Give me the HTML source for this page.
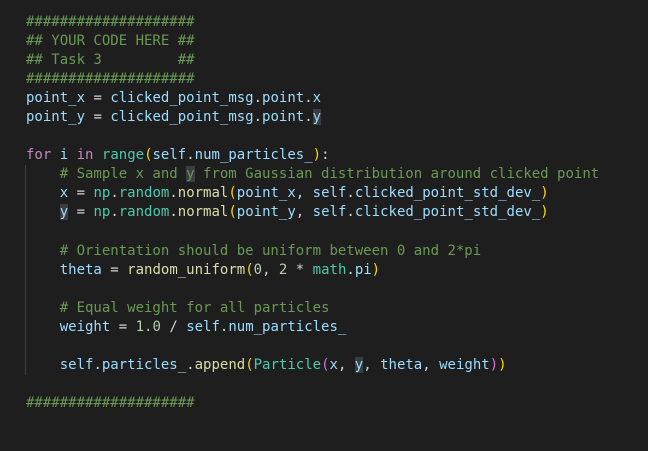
<!DOCTYPE html>
<html><head><style>
html,body{margin:0;padding:0;background:#1e1e1e;width:648px;height:451px;overflow:hidden}
pre{margin:0;position:absolute;left:26px;top:13px;font-family:"DejaVu Sans Mono","Liberation Mono",monospace;font-size:14px;line-height:19.05px;color:#d4d4d4;white-space:pre}
.c{color:#6a9955}.v{color:#9cdcfe}.k{color:#c586c0}.f{color:#dcdcaa}.t{color:#4ec9b0}.n{color:#b5cea8}.p{color:#ffd700}.q{color:#da70d6}
.h{background:#3a3d41}
.guide{position:absolute;left:25px;top:165px;width:1px;height:210px;background:#404040}
</style></head><body>
<div class="guide"></div>
<pre><span class="c">####################
## YOUR CODE HERE ##
## Task 3         ##
####################</span>
<span class="v">point_x</span> = <span class="v">clicked_point_msg</span>.<span class="v">point</span>.<span class="v">x</span>
<span class="v">point_y</span> = <span class="v">clicked_point_msg</span>.<span class="v">point</span>.<span class="v h">y</span>

<span class="k">for</span> <span class="v">i</span> <span class="k">in</span> <span class="t">range</span><span class="p">(</span><span class="v">self</span>.<span class="v">num_particles_</span><span class="p">)</span>:
    <span class="c"># Sample x and <span class="h">y</span> from Gaussian distribution around clicked point</span>
    <span class="v">x</span> = <span class="t">np</span>.<span class="t">random</span>.<span class="f">normal</span><span class="p">(</span><span class="v">point_x</span>, <span class="v">self</span>.<span class="v">clicked_point_std_dev_</span><span class="p">)</span>
    <span class="v h">y</span> = <span class="t">np</span>.<span class="t">random</span>.<span class="f">normal</span><span class="p">(</span><span class="v">point_y</span>, <span class="v">self</span>.<span class="v">clicked_point_std_dev_</span><span class="p">)</span>

    <span class="c"># Orientation should be uniform between 0 and 2*pi</span>
    <span class="v">theta</span> = <span class="f">random_uniform</span><span class="p">(</span><span class="n">0</span>, <span class="n">2</span> * <span class="t">math</span>.<span class="v">pi</span><span class="p">)</span>

    <span class="c"># Equal weight for all particles</span>
    <span class="v">weight</span> = <span class="n">1.0</span> / <span class="v">self</span>.<span class="v">num_particles_</span>

    <span class="v">self</span>.<span class="v">particles_</span>.<span class="f">append</span><span class="p">(</span><span class="t">Particle</span><span class="q">(</span><span class="v">x</span>, <span class="v h">y</span>, <span class="v">theta</span>, <span class="v">weight</span><span class="q">)</span><span class="p">)</span>

<span class="c">####################</span></pre>
</body></html>
